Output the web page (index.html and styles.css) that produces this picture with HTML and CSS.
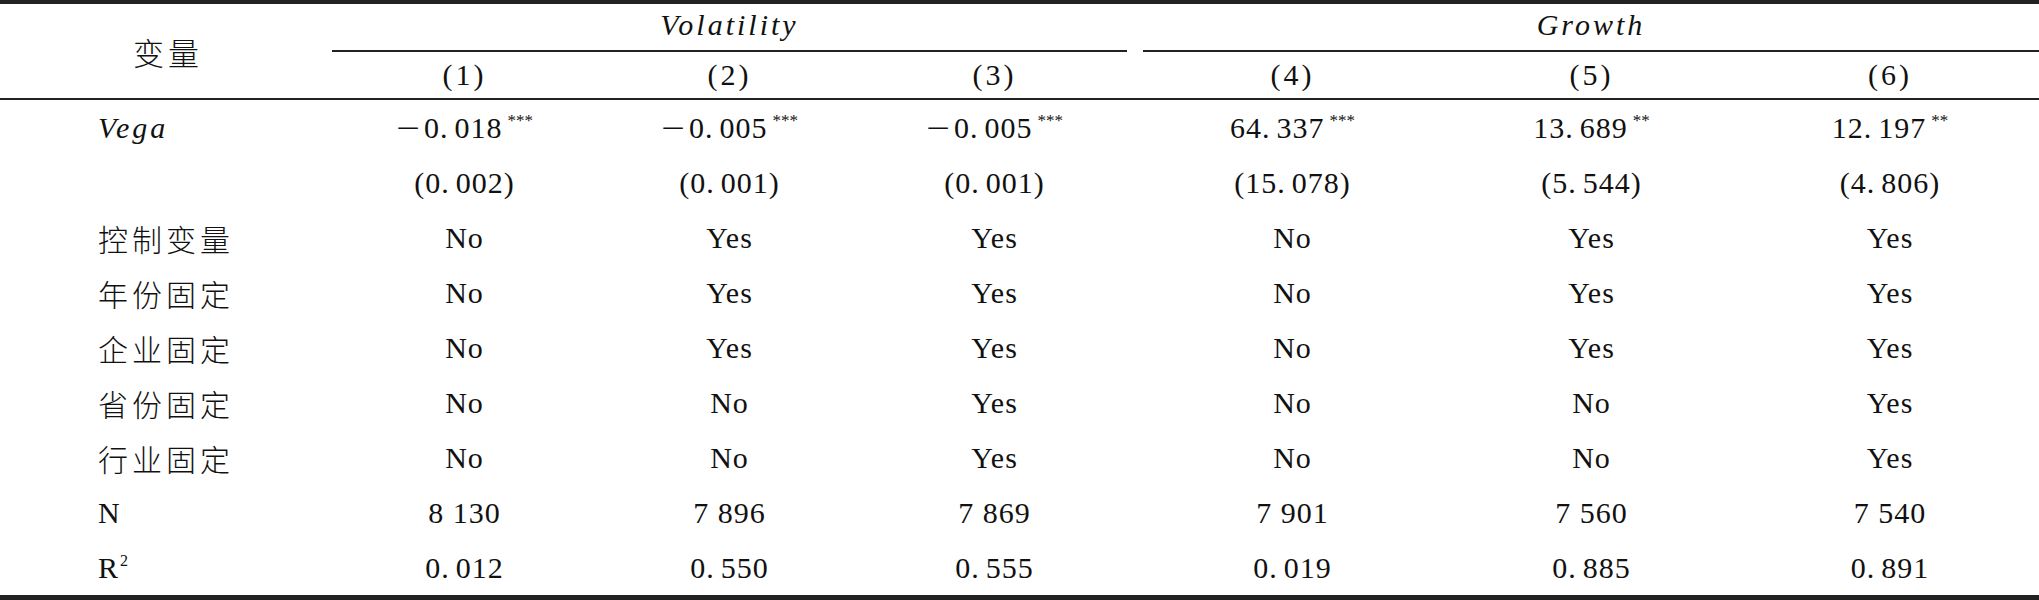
FILE: index.html
```html
<!DOCTYPE html>
<html lang="zh">
<head>
<meta charset="utf-8">
<title>回归结果</title>
<link rel="stylesheet" href="styles.css">
</head>
<body>
<main class="tbl">
  <div class="cell var">变量</div>
  <div class="cell group vol"><span class="it">Volatility</span></div>
  <div class="cell group grow"><span class="it">Growth</span></div>

  <div class="cell h">(1)</div>
  <div class="cell h">(2)</div>
  <div class="cell h">(3)</div>
  <div class="cell h g">(4)</div>
  <div class="cell h">(5)</div>
  <div class="cell h">(6)</div>

  <div class="cell lab it">Vega</div>
  <div class="cell"><span class="minus">−</span>0<span class="dot">.</span>018<sup class="st">***</sup></div>
  <div class="cell"><span class="minus">−</span>0<span class="dot">.</span>005<sup class="st">***</sup></div>
  <div class="cell"><span class="minus">−</span>0<span class="dot">.</span>005<sup class="st">***</sup></div>
  <div class="cell g">64<span class="dot">.</span>337<sup class="st">***</sup></div>
  <div class="cell">13<span class="dot">.</span>689<sup class="st">**</sup></div>
  <div class="cell">12<span class="dot">.</span>197<sup class="st">**</sup></div>

  <div class="cell lab"></div>
  <div class="cell">(0<span class="dot">.</span>002)</div>
  <div class="cell">(0<span class="dot">.</span>001)</div>
  <div class="cell">(0<span class="dot">.</span>001)</div>
  <div class="cell g">(15<span class="dot">.</span>078)</div>
  <div class="cell">(5<span class="dot">.</span>544)</div>
  <div class="cell">(4<span class="dot">.</span>806)</div>

  <div class="cell lab cn">控制变量</div>
  <div class="cell">No</div>
  <div class="cell">Yes</div>
  <div class="cell">Yes</div>
  <div class="cell g">No</div>
  <div class="cell">Yes</div>
  <div class="cell">Yes</div>

  <div class="cell lab cn">年份固定</div>
  <div class="cell">No</div>
  <div class="cell">Yes</div>
  <div class="cell">Yes</div>
  <div class="cell g">No</div>
  <div class="cell">Yes</div>
  <div class="cell">Yes</div>

  <div class="cell lab cn">企业固定</div>
  <div class="cell">No</div>
  <div class="cell">Yes</div>
  <div class="cell">Yes</div>
  <div class="cell g">No</div>
  <div class="cell">Yes</div>
  <div class="cell">Yes</div>

  <div class="cell lab cn">省份固定</div>
  <div class="cell">No</div>
  <div class="cell">No</div>
  <div class="cell">Yes</div>
  <div class="cell g">No</div>
  <div class="cell">No</div>
  <div class="cell">Yes</div>

  <div class="cell lab cn">行业固定</div>
  <div class="cell">No</div>
  <div class="cell">No</div>
  <div class="cell">Yes</div>
  <div class="cell g">No</div>
  <div class="cell">No</div>
  <div class="cell">Yes</div>

  <div class="cell lab">N</div>
  <div class="cell">8 130</div>
  <div class="cell">7 896</div>
  <div class="cell">7 869</div>
  <div class="cell g">7 901</div>
  <div class="cell">7 560</div>
  <div class="cell">7 540</div>

  <div class="cell lab r2">R<sup class="sq">2</sup></div>
  <div class="cell">0<span class="dot">.</span>012</div>
  <div class="cell">0<span class="dot">.</span>550</div>
  <div class="cell">0<span class="dot">.</span>555</div>
  <div class="cell g">0<span class="dot">.</span>019</div>
  <div class="cell">0<span class="dot">.</span>885</div>
  <div class="cell">0<span class="dot">.</span>891</div>
</main>
</body>
</html>
```

FILE: styles.css
```css
html, body {
  margin: 0;
  padding: 0;
  background: #ffffff;
}

body {
  width: 2039px;
  height: 600px;
  overflow: hidden;
  color: #111111;
  font-family: "Liberation Serif", "Noto Sans CJK SC", serif;
  font-size: 30px;
}

.tbl {
  display: grid;
  grid-template-columns: 332px 265px 265px 265px 315px 299px 1fr;
  grid-template-rows: 48px 48px repeat(9, 55px);
  border-top: 4px solid #222222;
  border-bottom: 5px solid #222222;
  box-sizing: border-box;
  height: 600px;
}

.cell {
  display: flex;
  align-items: center;
  justify-content: center;
  box-sizing: border-box;
  letter-spacing: 1px;
  white-space: nowrap;
  line-height: 1;
}

.var {
  grid-column: 1;
  grid-row: 1 / 3;
  font-family: "Noto Sans CJK SC", sans-serif;
  font-weight: 300;
  font-size: 31px;
  letter-spacing: 4px;
  padding-left: 4px;
  border-bottom: 2px solid #222222;
}

.group {
  grid-row: 1;
  border-bottom: 2px solid #222222;
  padding-bottom: 4px;
}

.vol {
  grid-column: 2 / 5;
}

.grow {
  grid-column: 5 / 8;
  margin-left: 16px;
}

.it {
  font-family: "Liberation Serif", serif;
  font-style: italic;
  letter-spacing: 3px;
}

.h {
  border-bottom: 2px solid #222222;
  letter-spacing: 3px;
}

.g {
  padding-left: 16px;
}

.lab {
  justify-content: flex-start;
  padding-left: 98px;
}

.cn {
  font-family: "Noto Sans CJK SC", sans-serif;
  font-weight: 300;
  letter-spacing: 4px;
}

.minus {
  display: inline-block;
  transform: scaleX(1.4);
  margin-left: 4px;
  margin-right: 6px;
}

.dot {
  margin-right: 6px;
}

.st {
  font-size: 17px;
  letter-spacing: 0;
  align-self: flex-start;
  margin-top: 12px;
  margin-left: 5px;
}

.r2 {
  letter-spacing: 0;
}

.sq {
  font-size: 16px;
  align-self: flex-start;
  margin-top: 13px;
  margin-left: 2px;
}
```
